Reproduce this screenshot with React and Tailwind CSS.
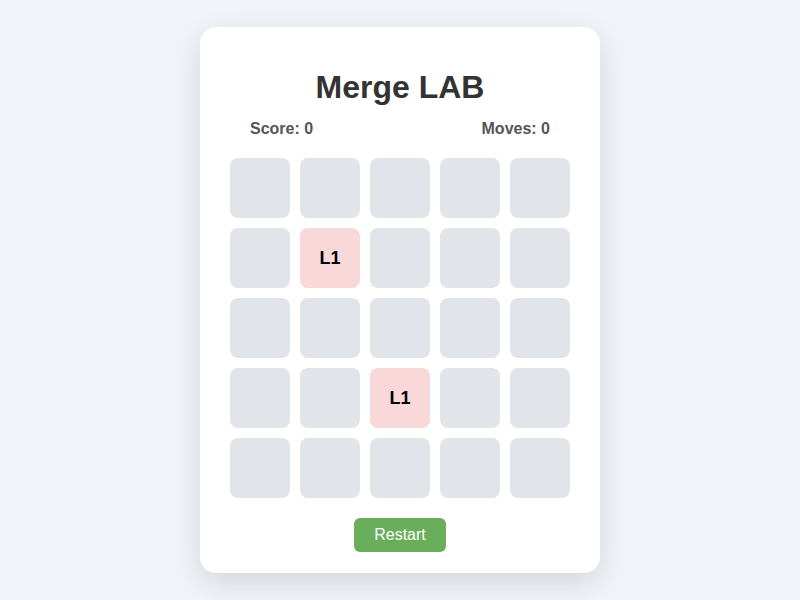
import React from "react";

const tiles = {
  6: "L1",
  17: "L1",
};

export default function App() {
  const cells = Array.from({ length: 25 }, (_, i) => i);

  return (
    <div
      className="w-[800px] h-[600px] bg-[#f0f3f8] flex justify-center pt-[27px]"
      style={{ fontFamily: '"Liberation Sans", Arial, sans-serif' }}
    >
      <div className="w-[400px] h-[546px] bg-white rounded-2xl shadow-[0_10px_30px_rgba(0,0,0,0.12)] px-[30px] pt-[42px] flex flex-col">
        {/* Title */}
        <h1 className="text-[32px] leading-[37px] font-bold text-[#333] text-center">
          Merge LAB
        </h1>

        {/* Score row */}
        <div className="flex justify-between px-5 mt-[14px] text-base leading-[18px] font-bold text-[#555]">
          <span>Score: 0</span>
          <span>Moves: 0</span>
        </div>

        {/* Board */}
        <div className="grid grid-cols-5 gap-[10px] mt-5">
          {cells.map((i) =>
            tiles[i] ? (
              <div
                key={i}
                className="h-[60px] rounded-lg bg-[#f8d8d8] flex items-center justify-center text-[18px] font-bold text-black"
              >
                {tiles[i]}
              </div>
            ) : (
              <div key={i} className="h-[60px] rounded-lg bg-[#e1e4e8]" />
            )
          )}
        </div>

        {/* Restart */}
        <div className="flex justify-center mt-5">
          <button className="h-[34px] px-5 rounded-md bg-[#6aae5c] text-white text-base">
            Restart
          </button>
        </div>
      </div>
    </div>
  );
}
